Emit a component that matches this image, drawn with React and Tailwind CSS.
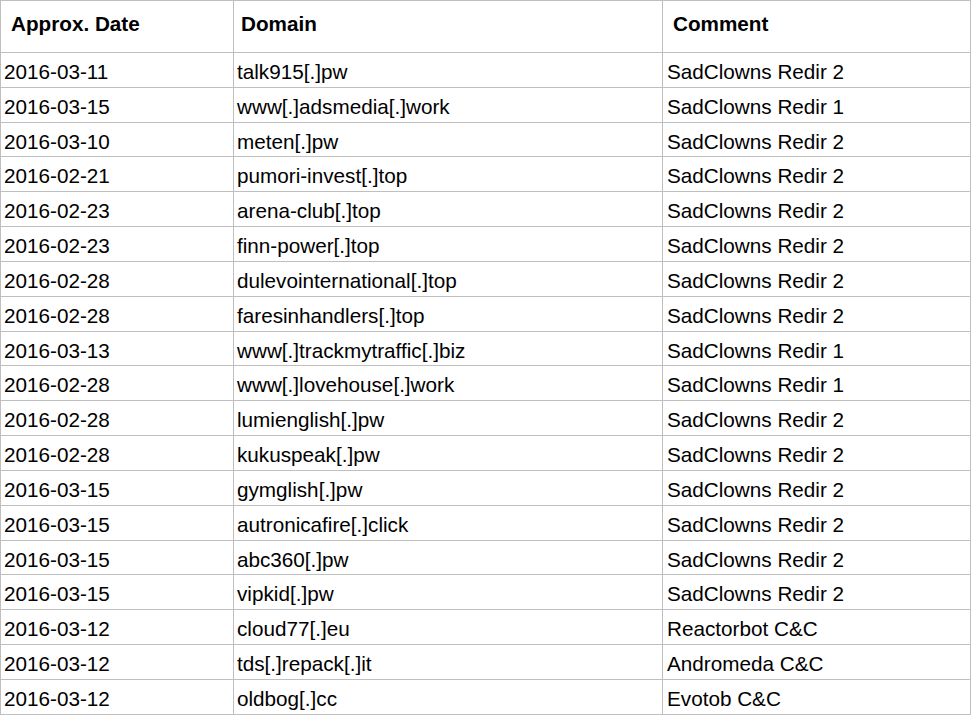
import React from 'react';

const rows = [
    ['2016-03-11', 'talk915[.]pw', 'SadClowns Redir 2'],
    ['2016-03-15', 'www[.]adsmedia[.]work', 'SadClowns Redir 1'],
    ['2016-03-10', 'meten[.]pw', 'SadClowns Redir 2'],
    ['2016-02-21', 'pumori-invest[.]top', 'SadClowns Redir 2'],
    ['2016-02-23', 'arena-club[.]top', 'SadClowns Redir 2'],
    ['2016-02-23', 'finn-power[.]top', 'SadClowns Redir 2'],
    ['2016-02-28', 'dulevointernational[.]top', 'SadClowns Redir 2'],
    ['2016-02-28', 'faresinhandlers[.]top', 'SadClowns Redir 2'],
    ['2016-03-13', 'www[.]trackmytraffic[.]biz', 'SadClowns Redir 1'],
    ['2016-02-28', 'www[.]lovehouse[.]work', 'SadClowns Redir 1'],
    ['2016-02-28', 'lumienglish[.]pw', 'SadClowns Redir 2'],
    ['2016-02-28', 'kukuspeak[.]pw', 'SadClowns Redir 2'],
    ['2016-03-15', 'gymglish[.]pw', 'SadClowns Redir 2'],
    ['2016-03-15', 'autronicafire[.]click', 'SadClowns Redir 2'],
    ['2016-03-15', 'abc360[.]pw', 'SadClowns Redir 2'],
    ['2016-03-15', 'vipkid[.]pw', 'SadClowns Redir 2'],
    ['2016-03-12', 'cloud77[.]eu', 'Reactorbot C&C'],
    ['2016-03-12', 'tds[.]repack[.]it', 'Andromeda C&C'],
    ['2016-03-12', 'oldbog[.]cc', 'Evotob C&C'],
];

const cols = 'grid grid-cols-[232px_429px_1fr]';

export default function App() {
    return (
        <div className="min-h-screen bg-white">
            <div
                className="w-[971px] border border-b-0 border-[#bfbfbf] text-black text-[20.7px] leading-[24px]"
                style={{ fontFamily: '"Liberation Sans", Arial, sans-serif' }}
            >
                {/* Header */}
                <div className={`${cols} h-[52px] border-b border-[#bfbfbf] font-bold`}>
                    <div className="pl-[10px] pt-[11px]">Approx. Date</div>
                    <div className="pl-[7px] pt-[11px] border-l border-[#bfbfbf]">Domain</div>
                    <div className="pl-[10px] pt-[11px] border-l border-[#bfbfbf]">Comment</div>
                </div>

                {/* Rows */}
                {rows.map(([date, domain, comment], i) => (
                    <div key={i} className={`${cols} h-[34.84px] border-b border-[#bfbfbf]`}>
                        <div className="pl-[3px] pt-[7px]">{date}</div>
                        <div className="pl-[3px] pt-[7px] border-l border-[#bfbfbf]">{domain}</div>
                        <div className="pl-[4px] pt-[7px] border-l border-[#bfbfbf]">{comment}</div>
                    </div>
                ))}
            </div>
        </div>
    );
}
